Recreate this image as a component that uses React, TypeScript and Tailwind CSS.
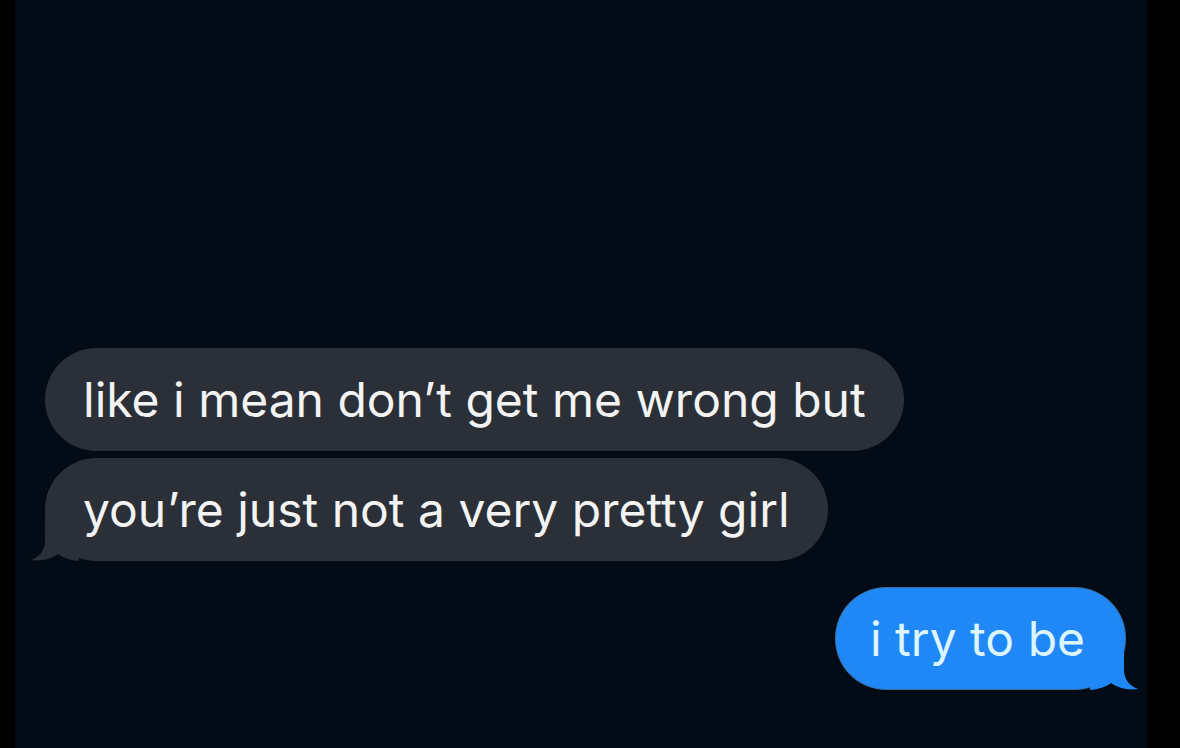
export default function App() {
  return (
    <div
      className="flex h-[748px] w-[1180px] overflow-hidden bg-black"
      style={{ fontFamily: 'Inter, "Liberation Sans", Arial, sans-serif' }}
    >
      <div className="w-[15px] shrink-0 bg-black" />
      <div className="flex flex-1 flex-col bg-[#030c16] pt-[348px]">
        {/* incoming */}
        <div className="ml-[30px] flex flex-col items-start gap-[7px]">
          <div className="flex h-[103px] items-center rounded-[52px] bg-[#2b3038] pl-[38px] pr-[38px] text-[48px] leading-none text-[#f3f3f3]">
            like i mean don’t get me wrong but
          </div>
          <div className="relative flex h-[103px] items-center rounded-[52px] bg-[#2b3038] pl-[38px] pr-[38px] text-[48px] leading-none text-[#f3f3f3]">
            <svg
              className="absolute bottom-0 left-[-14px]"
              width="48"
              height="44"
              viewBox="0 0 48 44"
            >
              <path
                d="M14 0 L14 24 C14 34 8 40 0 43 C10 44.5 20 42 27 37 C32 41 40 43.5 48 44 L48 0 Z"
                fill="#2b3038"
              />
            </svg>
            <span className="relative">you’re just not a very pretty girl</span>
          </div>
        </div>

        {/* outgoing */}
        <div className="mr-[22px] mt-[27px] flex justify-end">
          <div className="relative flex h-[101px] items-center rounded-[50px] bg-[#1f88f6] pl-[34px] pr-[40px] text-[48px] leading-none text-[#dcf5ff] ring-1 ring-[#5fb0ff]/60">
            <svg
              className="absolute bottom-[-1px] right-[-13px]"
              width="48"
              height="44"
              viewBox="0 0 48 44"
            >
              <path
                d="M34 0 L34 24 C34 34 40 40 48 43 C38 44.5 28 42 21 37 C16 41 8 43.5 0 44 L0 0 Z"
                fill="#1f88f6"
              />
            </svg>
            <span className="relative">i try to be</span>
          </div>
        </div>
      </div>
      <div className="w-[33px] shrink-0 bg-black" />
    </div>
  );
}
